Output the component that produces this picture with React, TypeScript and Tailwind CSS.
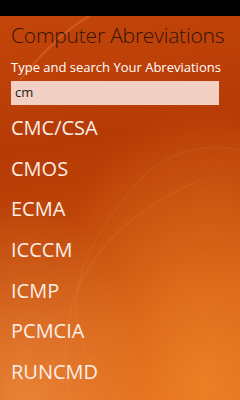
import React from "react";

const items = ["CMC/CSA", "CMOS", "ECMA", "ICCCM", "ICMP", "PCMCIA", "RUNCMD"];

export default function App() {
  return (
    <div
      className="relative w-[240px] h-[400px] overflow-hidden bg-[linear-gradient(170deg,#c4480b_0%,#b63a05_35%,#c44c0b_65%,#e0661a_100%)]"
      style={{ fontFamily: '"Open Sans", "Noto Sans", sans-serif' }}
    >
      <svg className="absolute inset-0 pointer-events-none" width="240" height="400" viewBox="0 0 240 400">
        <defs>
          <radialGradient id="g1" cx="0.85" cy="0.95" r="0.7">
            <stop offset="0" stopColor="#f28a2a" stopOpacity="0.7" />
            <stop offset="1" stopColor="#f28a2a" stopOpacity="0" />
          </radialGradient>
          <radialGradient id="g2" cx="0.1" cy="1" r="0.5">
            <stop offset="0" stopColor="#f7a050" stopOpacity="0.55" />
            <stop offset="1" stopColor="#f7a050" stopOpacity="0" />
          </radialGradient>
        </defs>
        <rect width="240" height="400" fill="url(#g1)" />
        <rect width="240" height="400" fill="url(#g2)" />
        <path d="M20 80 Q60 30 100 10" stroke="#f0904a" strokeOpacity="0.3" strokeWidth="2" fill="none" />
        <path d="M70 400 Q40 250 200 180" stroke="#f6a060" strokeOpacity="0.1" strokeWidth="2" fill="none" />
        <path d="M120 400 Q20 300 150 170 Q190 140 240 150" stroke="#f6a060" strokeOpacity="0.08" strokeWidth="2" fill="none" />
      </svg>
      <div className="relative flex flex-col">
        <div className="h-[16px] bg-black" />
        <div className="pl-[11px] pt-[4px] text-[21px] leading-[30px] font-light text-[#361405] tracking-[-0.2px]">
          Computer Abreviations
        </div>
        <div className="pl-[11px] pt-[8px] text-[13px] leading-[18px] text-white">
          Type and search Your Abreviations
        </div>
        <div className="ml-[11px] mt-[5px] w-[208px] h-[24px] bg-[#f2d0c3] flex items-center pl-[4px] text-[13px] text-[#222]">
          cm
        </div>
        <div className="flex flex-col pl-[11px] pt-[3px]">
          {items.map((t) => (
            <div key={t} className="h-[40.67px] text-[20px] leading-[40px] text-[#fbeee6]">
              {t}
            </div>
          ))}
        </div>
      </div>
    </div>
  );
}
